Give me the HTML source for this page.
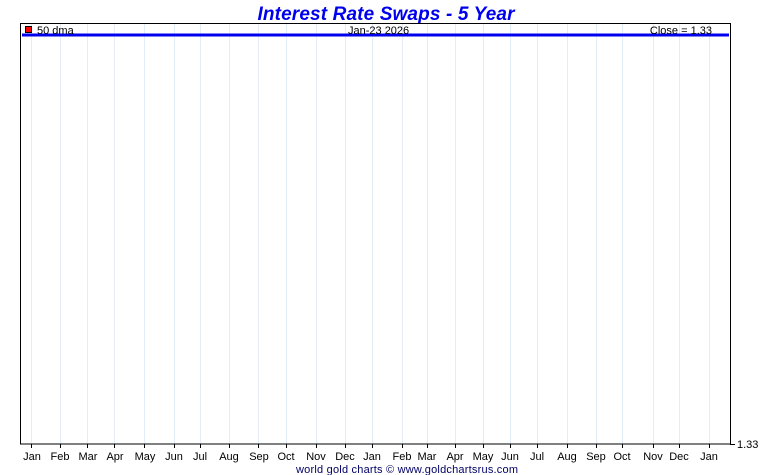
<!DOCTYPE html>
<html><head><meta charset="utf-8"><style>
html,body{margin:0;padding:0;background:#fff;}
svg{display:block;font-family:"Liberation Sans",Arial,sans-serif;}
</style></head><body>
<svg width="772" height="475" xmlns="http://www.w3.org/2000/svg">
<text x="386" y="20" text-anchor="middle" font-size="19" font-weight="bold" font-style="italic" fill="#0000ee" textLength="257">Interest Rate Swaps - 5 Year</text>
<g stroke="#e3edf7" stroke-width="1">
<line x1="31.5" y1="24" x2="31.5" y2="444"/><line x1="60.5" y1="24" x2="60.5" y2="444"/><line x1="87.5" y1="24" x2="87.5" y2="444"/><line x1="114.5" y1="24" x2="114.5" y2="444"/><line x1="144.5" y1="24" x2="144.5" y2="444"/><line x1="174.5" y1="24" x2="174.5" y2="444"/><line x1="200.5" y1="24" x2="200.5" y2="444"/><line x1="229.5" y1="24" x2="229.5" y2="444"/><line x1="258.5" y1="24" x2="258.5" y2="444"/><line x1="286.5" y1="24" x2="286.5" y2="444"/><line x1="316.5" y1="24" x2="316.5" y2="444"/><line x1="345.5" y1="24" x2="345.5" y2="444"/><line x1="372.5" y1="24" x2="372.5" y2="444"/><line x1="402.5" y1="24" x2="402.5" y2="444"/><line x1="427.5" y1="24" x2="427.5" y2="444"/><line x1="455.5" y1="24" x2="455.5" y2="444"/><line x1="483.5" y1="24" x2="483.5" y2="444"/><line x1="510.5" y1="24" x2="510.5" y2="444"/><line x1="537.5" y1="24" x2="537.5" y2="444"/><line x1="567.5" y1="24" x2="567.5" y2="444"/><line x1="596.5" y1="24" x2="596.5" y2="444"/><line x1="622.5" y1="24" x2="622.5" y2="444"/><line x1="653.5" y1="24" x2="653.5" y2="444"/><line x1="679.5" y1="24" x2="679.5" y2="444"/><line x1="709.5" y1="24" x2="709.5" y2="444"/>
</g>
<rect x="20.5" y="23.5" width="710" height="420.5" fill="none" stroke="#000" stroke-width="1"/>
<g stroke="#000" stroke-width="1">
<line x1="31.5" y1="444" x2="31.5" y2="448"/><line x1="60.5" y1="444" x2="60.5" y2="448"/><line x1="87.5" y1="444" x2="87.5" y2="448"/><line x1="114.5" y1="444" x2="114.5" y2="448"/><line x1="144.5" y1="444" x2="144.5" y2="448"/><line x1="174.5" y1="444" x2="174.5" y2="448"/><line x1="200.5" y1="444" x2="200.5" y2="448"/><line x1="229.5" y1="444" x2="229.5" y2="448"/><line x1="258.5" y1="444" x2="258.5" y2="448"/><line x1="286.5" y1="444" x2="286.5" y2="448"/><line x1="316.5" y1="444" x2="316.5" y2="448"/><line x1="345.5" y1="444" x2="345.5" y2="448"/><line x1="372.5" y1="444" x2="372.5" y2="448"/><line x1="402.5" y1="444" x2="402.5" y2="448"/><line x1="427.5" y1="444" x2="427.5" y2="448"/><line x1="455.5" y1="444" x2="455.5" y2="448"/><line x1="483.5" y1="444" x2="483.5" y2="448"/><line x1="510.5" y1="444" x2="510.5" y2="448"/><line x1="537.5" y1="444" x2="537.5" y2="448"/><line x1="567.5" y1="444" x2="567.5" y2="448"/><line x1="596.5" y1="444" x2="596.5" y2="448"/><line x1="622.5" y1="444" x2="622.5" y2="448"/><line x1="653.5" y1="444" x2="653.5" y2="448"/><line x1="679.5" y1="444" x2="679.5" y2="448"/><line x1="709.5" y1="444" x2="709.5" y2="448"/>
<line x1="730" y1="444.5" x2="735" y2="444.5"/>
</g>
<rect x="22" y="33.5" width="707" height="3" fill="#0000ee"/>
<rect x="25.5" y="26.5" width="6" height="6" fill="#ff0000" stroke="#000" stroke-width="1"/>
<g font-size="11" fill="#000">
<text x="37" y="34">50 dma</text>
<text x="348" y="34">Jan-23  2026</text>
<text x="712" y="34" text-anchor="end">Close = 1.33</text>
<text x="737" y="448">1.33</text>
</g>
<g font-size="11" fill="#000" text-anchor="middle">
<text x="32" y="460">Jan</text><text x="60" y="460">Feb</text><text x="88" y="460">Mar</text><text x="115" y="460">Apr</text><text x="145" y="460">May</text><text x="174" y="460">Jun</text><text x="200" y="460">Jul</text><text x="229" y="460">Aug</text><text x="259" y="460">Sep</text><text x="286" y="460">Oct</text><text x="316" y="460">Nov</text><text x="345" y="460">Dec</text><text x="372" y="460">Jan</text><text x="402" y="460">Feb</text><text x="427" y="460">Mar</text><text x="455" y="460">Apr</text><text x="483" y="460">May</text><text x="510" y="460">Jun</text><text x="537" y="460">Jul</text><text x="567" y="460">Aug</text><text x="596" y="460">Sep</text><text x="622" y="460">Oct</text><text x="653" y="460">Nov</text><text x="679" y="460">Dec</text><text x="709" y="460">Jan</text>
</g>
<text x="296" y="473" font-size="11" fill="#000066" textLength="222">world gold charts © www.goldchartsrus.com</text>
</svg>
</body></html>
